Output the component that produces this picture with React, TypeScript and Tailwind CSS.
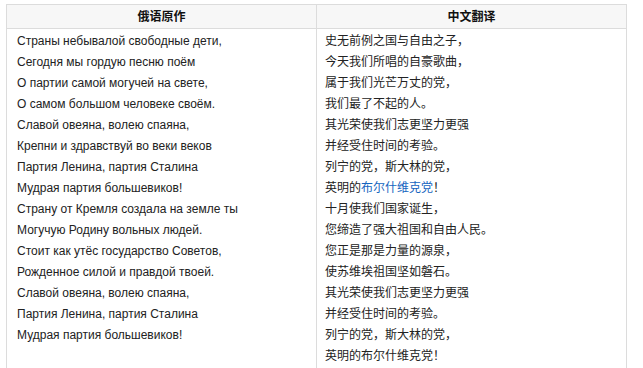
const RU = [
  'Страны небывалой свободные дети,',
  'Сегодня мы гордую песню поём',
  'О партии самой могучей на свете,',
  'О самом большом человеке своём.',
  'Славой овеяна, волею спаяна,',
  'Крепни и здравствуй во веки веков',
  'Партия Ленина, партия Сталина',
  'Мудрая партия большевиков!',
  'Страну от Кремля создала на земле ты',
  'Могучую Родину вольных людей.',
  'Стоит как утёс государство Советов,',
  'Рожденное силой и правдой твоей.',
  'Славой овеяна, волею спаяна,',
  'Партия Ленина, партия Сталина',
  'Мудрая партия большевиков!',
]

const ZH = [
  '史无前例之国与自由之子，',
  '今天我们所唱的自豪歌曲，',
  '属于我们光芒万丈的党，',
  '我们最了不起的人。',
  '其光荣使我们志更坚力更强',
  '并经受住时间的考验。',
  '列宁的党，斯大林的党，',
  'LINK',
  '十月使我们国家诞生，',
  '您缔造了强大祖国和自由人民。',
  '您正是那是力量的源泉，',
  '使苏维埃祖国坚如磐石。',
  '其光荣使我们志更坚力更强',
  '并经受住时间的考验。',
  '列宁的党，斯大林的党，',
  '英明的布尔什维克党！',
]

export default function App() {
  return (
    <div className="min-h-screen bg-white pt-[4px] pl-[6px] font-['Liberation_Sans','Noto_Sans_CJK_SC',sans-serif] text-[12px] text-[#222]">
      <table className="w-[621px] border-collapse border border-[#dcdcdc]">
        <thead>
          <tr className="bg-[#f7f7f7]">
            <th className="h-[24px] w-[310px] border border-[#dcdcdc] p-0 text-center font-bold text-[#111]">俄语原作</th>
            <th className="h-[24px] border border-[#dcdcdc] p-0 text-center font-bold text-[#111]">中文翻译</th>
          </tr>
        </thead>
        <tbody>
          <tr>
            <td className="border border-[#dcdcdc] pl-[10px] pt-[2px] pb-[2px] align-top">
              {RU.map((line, i) => (
                <div key={i} className="leading-[21px] whitespace-nowrap">{line}</div>
              ))}
            </td>
            <td className="border border-[#dcdcdc] pl-[8px] pt-[2px] pb-[2px] align-top">
              {ZH.map((line, i) => (
                <div key={i} className="leading-[21px] whitespace-nowrap">
                  {line === 'LINK' ? (
                    <>
                      英明的<a href="#" className="text-[#1565c0]">布尔什维克党</a>！
                    </>
                  ) : (
                    line
                  )}
                </div>
              ))}
            </td>
          </tr>
        </tbody>
      </table>
    </div>
  )
}
